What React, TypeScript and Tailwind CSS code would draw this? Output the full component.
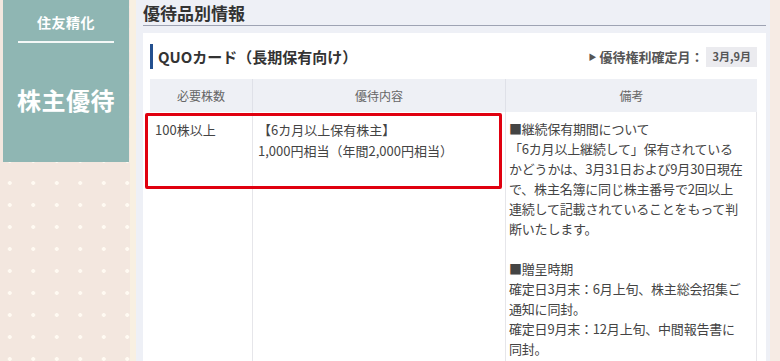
import React from 'react';

const font = { fontFamily: '"Noto Sans CJK JP", "Noto Sans", sans-serif' };

const noteLines = [
  '■継続保有期間について',
  '「6カ月以上継続して」保有されている',
  'かどうかは、3月31日および9月30日現在',
  'で、株主名簿に同じ株主番号で2回以上',
  '連続して記載されていることをもって判',
  '断いたします。',
  '',
  '■贈呈時期',
  '確定日3月末：6月上旬、株主総会招集ご',
  '通知に同封。',
  '確定日9月末：12月上旬、中間報告書に',
  '同封。',
];

export default function App() {
  return (
    <div className="flex h-[361px] w-[780px] overflow-hidden bg-[#f3e7df]" style={font}>
      {/* Side */}
      <aside className="w-[130px] shrink-0 pl-[3px] bg-[#f3e7df] bg-[radial-gradient(circle,#fffaf2_1.6px,transparent_2.2px)] bg-[size:23.5px_22px] bg-[position:-2px_-4px]">
        <div className="h-[162px] w-[126px] bg-[#8fb6b3] flex flex-col items-center text-white">
          <div className="mt-[12px] text-[14px] font-bold leading-[20px] tracking-[0.5px]">住友精化</div>
          <div className="mt-[9px] h-[2px] w-[96px] bg-white/90" />
          <div className="mt-[42px] text-[24px] font-bold leading-[30px] tracking-[0.5px]">株主優待</div>
        </div>
      </aside>
      <div className="w-[6px] shrink-0 bg-[#f8f0e2]" />

      {/* Main */}
      <main className="w-[634px] shrink-0 bg-[#eef0f6] pl-[7px] pr-[4px]">
        <h2 className="text-[17px] font-bold text-[#333] leading-[24px] pt-[1px] border-b border-[#9ea3b3]">
          優待品別情報
        </h2>
        <section className="relative mt-[7px] bg-white pl-[7px] pr-[9px] h-[400px]">
          <div className="flex items-center justify-between pt-[11px] pb-[10px]">
            <div className="flex items-center">
              <span className="block w-[3px] h-[25px] bg-[#24508f]" />
              <span className="ml-[5px] text-[15px] font-bold text-[#333] leading-[20px]">QUOカード（長期保有向け）</span>
            </div>
            <div className="flex items-center text-[#555]">
              <span className="text-[8px] mr-[3px]">▶</span>
              <span className="text-[13px] font-bold">優待権利確定月：</span>
              <span className="ml-[3px] bg-[#ebebef] px-[6px] h-[20px] flex items-center text-[11px] font-bold">3月,9月</span>
            </div>
          </div>

          <div className="grid grid-cols-[102px_253px_252px] text-[13px] text-[#444]">
            <div className="h-[33px] bg-[#eef0f5] flex items-center justify-center text-[12px] text-[#666]">必要株数</div>
            <div className="h-[33px] bg-[#eef0f5] border-l border-[#dfe1e8] flex items-center justify-center text-[12px] text-[#666]">優待内容</div>
            <div className="h-[33px] bg-[#eef0f5] border-l border-[#dfe1e8] flex items-center justify-center text-[12px] text-[#666]">備考</div>

            <div className="pt-[7px] pl-[5px] leading-[21px] h-[260px]">100株以上</div>
            <div className="pt-[7px] pl-[5px] leading-[21px] border-l border-[#e6e6ea]">
              <div>【6カ月以上保有株主】</div>
              <div>1,000円相当（年間2,000円相当）</div>
            </div>
            <div className="pt-[7px] pl-[3px] leading-[20px] border-l border-[#e6e6ea] border-r whitespace-nowrap tracking-[-0.2px]">
              {noteLines.map((l, i) => (
                <div key={i} className="h-[20px]">{l}</div>
              ))}
            </div>
          </div>

          {/* highlight */}
          <div className="absolute left-[2px] top-[80px] w-[357px] h-[76px] border-[3px] border-[#e0000f] rounded-[2px]" />
        </section>
      </main>
      <div className="flex-1 bg-[#f6ebe4]" />
    </div>
  );
}
